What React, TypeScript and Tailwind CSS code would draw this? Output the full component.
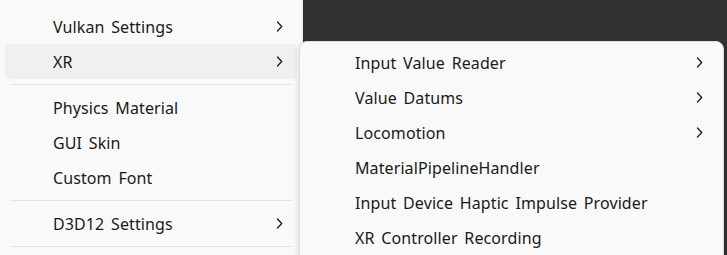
import React from "react";

const Chevron = () => (
  <svg width="7" height="11" viewBox="0 0 7 11" fill="none" className="shrink-0">
    <path d="M1.5 1L5.7 5.5L1.5 10" stroke="#1b1b1b" strokeWidth="1.3" strokeLinecap="round" strokeLinejoin="round" />
  </svg>
);

type Item = { label: string; sub?: boolean; active?: boolean };

const Row = ({ item, pad }: { item: Item; pad: string }) => (
  <div
    className={`mx-[5px] h-[35px] flex items-center rounded-[4px] ${pad} ${
      item.active ? "bg-[#f0f0f0]" : ""
    }`}
  >
    <span className="flex-1 text-[16px] tracking-[0.1px] [word-spacing:2.5px] text-[#1a1a1a] leading-none">
      {item.label}
    </span>
    {item.sub && <Chevron />}
  </div>
);

const Sep = () => (
  <div className="h-[11px] flex items-center px-[10px]">
    <div className="h-px w-full bg-[#e3e3e3]" />
  </div>
);

export default function App() {
  const font = { fontFamily: '"Segoe UI", "Noto Sans", "Open Sans", sans-serif' };
  const lp = "pl-[48px] pr-[14px]";
  const rp = "pl-[50px] pr-[15px]";
  return (
    <div className="w-[727px] h-[255px] overflow-hidden flex bg-[#323232]" style={font}>
      <div className="w-[303px] shrink-0 bg-[#f9f9f9] border-r border-[#e8e8e8] pt-[9px]">
        <Row item={{ label: "Vulkan Settings", sub: true }} pad={lp} />
        <Row item={{ label: "XR", sub: true, active: true }} pad={lp} />
        <Sep />
        <Row item={{ label: "Physics Material" }} pad={lp} />
        <Row item={{ label: "GUI Skin" }} pad={lp} />
        <Row item={{ label: "Custom Font" }} pad={lp} />
        <Sep />
        <Row item={{ label: "D3D12 Settings", sub: true }} pad={lp} />
        <Sep />
      </div>
      <div className="flex-1 min-w-0">
        <div className="ml-[-4px] mt-[41px] w-[425px] h-[240px] bg-[#f9f9f9] border border-[#dcdcdc] rounded-[8px] pt-[3px] shadow-[0_2px_6px_rgba(0,0,0,0.15)]">
          <Row item={{ label: "Input Value Reader", sub: true }} pad={rp} />
          <Row item={{ label: "Value Datums", sub: true }} pad={rp} />
          <Row item={{ label: "Locomotion", sub: true }} pad={rp} />
          <Row item={{ label: "MaterialPipelineHandler" }} pad={rp} />
          <Row item={{ label: "Input Device Haptic Impulse Provider" }} pad={rp} />
          <Row item={{ label: "XR Controller Recording" }} pad={rp} />
        </div>
      </div>
    </div>
  );
}
